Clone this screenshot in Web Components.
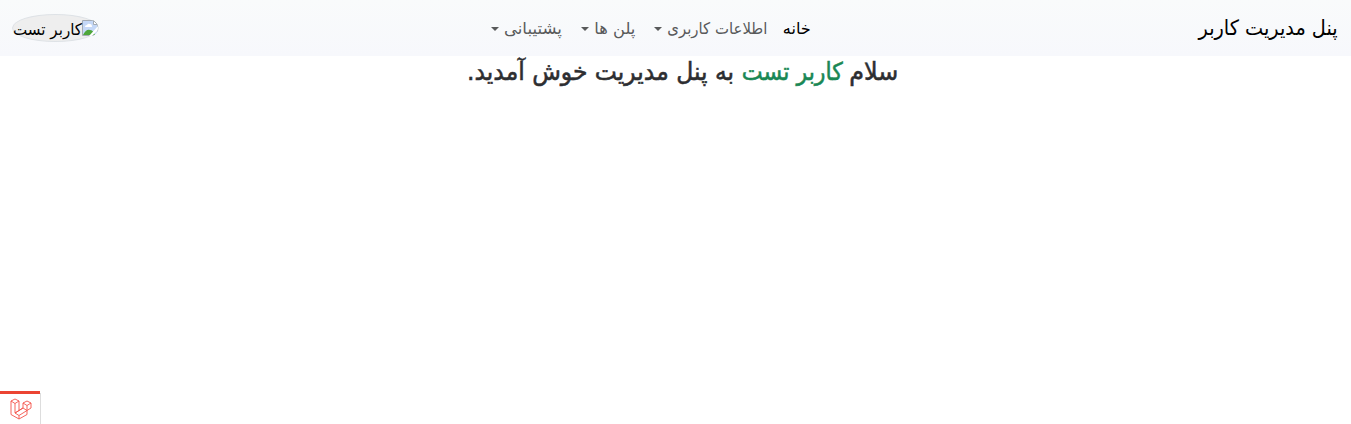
<!DOCTYPE html>
<html lang="fa" dir="rtl">
<head>
<meta charset="utf-8">
<title>پنل مدیریت کاربر</title>
<style>
html,body{margin:0;height:100%;overflow:hidden;background:#fff}
body{font-family:"DejaVu Sans",sans-serif;color:#2d2e31}
</style>
</head>
<body>
<user-panel></user-panel>
<script>
class FitText extends HTMLElement {
  connectedCallback() {
    const r = this.attachShadow({mode: 'open'});
    const w = +this.getAttribute('w');
    r.innerHTML = `<style>:host{display:inline-block;width:${w}px;height:1.5em;line-height:1.5em;white-space:nowrap;flex:none}
      span{display:inline-block;transform-origin:100% 50%}</style><span><slot></slot></span>`;
    const s = r.querySelector('span');
    s.style.transform = `scaleX(${w / s.getBoundingClientRect().width})`;
  }
}
class NavEntry extends HTMLElement {
  connectedCallback() {
    const menu = this.hasAttribute('menu');
    this.attachShadow({mode: 'open'}).innerHTML = `<style>
      :host{display:flex;align-items:center;padding:0 8px;font-size:16px;color:#595a5b}
      :host([menu]){padding-left:11px}
      :host([active]){color:#000}
      i{width:0;height:0;border:4px solid transparent;border-top-color:currentColor;border-bottom:0;margin-right:5px}
      </style><slot></slot>${menu ? '<i></i>' : ''}`;
  }
}
class UserAvatar extends HTMLElement {
  connectedCallback() {
    this.attachShadow({mode: 'open'}).innerHTML = `<style>
      :host{display:flex;box-sizing:border-box;width:87px;height:28px;border:1px solid #dee2e6;border-radius:50%;background:#eee;color:#000;font-size:16px;align-items:center;padding:3px 0 0}
      svg{flex:none;width:16px;height:16px;margin-top:-3px;border-radius:0 7px 7px 0/0 8px 8px 0}
      </style><svg viewBox="0 0 16 16"><path d="M.5 .5H11.5L15.5 4.500V15.500H.5Z" fill="#c5d8f7" stroke="#a4abb3"/><path d="M3 7q0-2 2-2 1-2 3-1 2 0 2 3z" fill="#fff"/><path d="M1 15q3-6 7-5 3 0 5 5z" fill="#4da63a"/><path d="M16 6L7 16H10L16 10Z" fill="#fff"/><path d="M11.500 .5V4.500H15.500Z" fill="#fff" stroke="#a4abb3"/></svg><slot></slot>`;
  }
}
class TopBar extends HTMLElement {
  connectedCallback() {
    this.attachShadow({mode: 'open'}).innerHTML = `<style>
      :host{display:flex;box-sizing:border-box;height:56px;padding:0 12px;align-items:center;background:linear-gradient(#f9fbfb,#f7f8fc)}
      .brand{font-size:21px;color:#000;padding:1px 1px 0 0}
      nav{display:flex;margin-right:380px;padding-top:1px}
      user-avatar{margin-right:auto}
      </style>
      <div class="brand"><fit-text w="139">پنل مدیریت کاربر</fit-text></div>
      <nav>
        <nav-entry active><fit-text w="28">خانه</fit-text></nav-entry>
        <nav-entry menu><fit-text w="100">اطلاعات کاربری</fit-text></nav-entry>
        <nav-entry menu><fit-text w="41">پلن ها</fit-text></nav-entry>
        <nav-entry menu><fit-text w="58">پشتیبانی</fit-text></nav-entry>
      </nav>
      <user-avatar><fit-text w="69">کاربر تست</fit-text></user-avatar>`;
  }
}
class WelcomeLine extends HTMLElement {
  connectedCallback() {
    this.attachShadow({mode: 'open'}).innerHTML = `<style>
      :host{display:flex;padding:0 453px 0 0;font-size:24.5px;-webkit-text-stroke:.55px currentColor;gap:7px;margin-top:-2px}
      .name{color:#198754;margin:0 -1px 0 1px}
      </style><fit-text w="49">سلام</fit-text><fit-text class="name" w="101">کاربر تست</fit-text><fit-text w="267">به پنل مدیریت خوش آمدید.</fit-text>`;
  }
}
class DebugBadge extends HTMLElement {
  connectedCallback() {
    this.attachShadow({mode: 'open'}).innerHTML = `<style>
      :host{display:flex;box-sizing:border-box;width:40px;height:33px;border-top:3px solid #eb4432;box-shadow:1px 2px 0 #ddd;justify-content:center;padding:4px 0 0 1px;background:#fff}
      svg{width:22px;height:22px}
      </style><svg viewBox="0 0 22 22" fill="none" stroke="#f4544b" stroke-width=".9" stroke-linejoin="round"><path d="M1 3L5 1L9 3V12.500L13 10V5L17 3L21 5V10L17 12.500V16.500L9 21L1 16.500ZM1 3L5 5.500L9 3M5 5.500V15L9 17.500V21M5 15L13 10L17 12.500L9 17.500M9 12.500L5 15M13 5L17 7.500L21 5M17 7.500V12.500"/></svg>`;
  }
}
class UserPanel extends HTMLElement {
  connectedCallback() {
    this.attachShadow({mode: 'open'}).innerHTML = `<style>
      :host{display:flex;flex-direction:column;height:100vh}
      debug-badge{margin-top:auto;align-self:flex-end}
      </style><top-bar></top-bar><welcome-line></welcome-line><debug-badge></debug-badge>`;
  }
}
customElements.define('user-panel', UserPanel);
customElements.define('top-bar', TopBar);
customElements.define('nav-entry', NavEntry);
customElements.define('user-avatar', UserAvatar);
customElements.define('welcome-line', WelcomeLine);
customElements.define('debug-badge', DebugBadge);
customElements.define('fit-text', FitText);
</script>
</body>
</html>
